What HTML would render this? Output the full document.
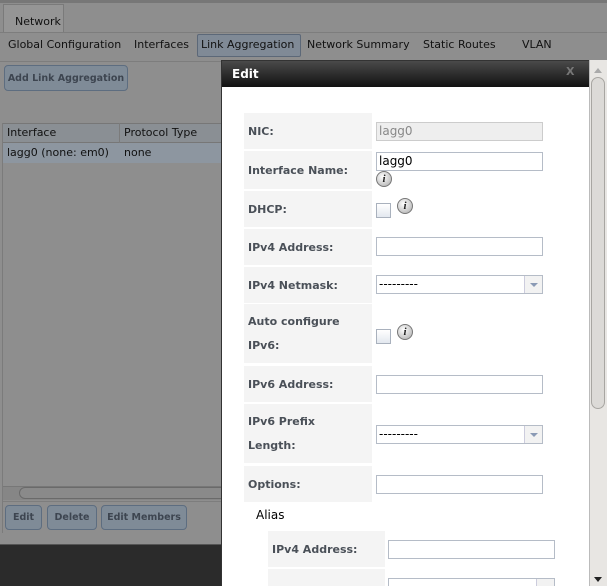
<!DOCTYPE html>
<html><head><style>
*{box-sizing:border-box;margin:0;padding:0}
html,body{width:607px;height:586px;overflow:hidden}
body{font-family:"DejaVu Sans","Liberation Sans",sans-serif;font-size:11px;position:relative;color:#000}
.a{position:absolute;white-space:nowrap}
.lbl{position:absolute;background:#f4f4f4;font-weight:bold;color:#4a5058;font-size:11px;padding-left:4px;display:flex;align-items:center}
.inp{position:absolute;height:19px;border:1px solid #b5bcc7;background:#fff;font-size:12px;padding-left:2px;line-height:17px}
.cb{position:absolute;width:15px;height:15px;border:1px solid #a9b1bd;background:linear-gradient(#fff,#e3e8ef)}
.info{position:absolute;width:16px;height:16px;border-radius:50%;border:1px solid #777;background:radial-gradient(circle at 40% 35%,#fff,#aaa);font:italic bold 11px "Liberation Serif",serif;text-align:center;line-height:14px;color:#222}
.sel .arr{position:absolute;right:0;top:0;width:18px;height:17px;border-left:1px solid #ccd;background:#f2f2f2}
.sel .arr:after{content:"";position:absolute;left:5px;top:7px;border:4px solid transparent;border-top:4px solid #8a9ab5}
.btn{position:absolute;height:25px;border:1px solid #5d6d80;border-radius:4px;background:#7f8b97;color:#3d4550;font-weight:bold;font-size:9.5px;display:flex;align-items:center;justify-content:center;white-space:nowrap}
</style></head><body>
<div class="a" style="left:0;top:0;width:607px;height:586px;background:#8e8e8e"></div>
<div class="a" style="left:0;top:0;width:607px;height:3px;background:#777"></div>
<div class="a" style="left:3px;top:4px;width:61px;height:29px;background:#959595;border:1px solid #7a7a7a;border-bottom:none;padding:10px 0 0 11px;font-size:11px;color:#111">Network</div>
<div class="a" style="left:0;top:32px;width:607px;height:1px;background:#7d7d7d"></div>
<div class="a" style="left:8px;top:38px;color:#111">Global Configuration</div>
<div class="a" style="left:134px;top:38px;color:#111">Interfaces</div>
<div class="a" style="left:197px;top:34px;width:104px;height:23px;border:1px solid #5c6878;border-radius:2px;background:#808a96"></div>
<div class="a" style="left:201px;top:38px;color:#111">Link Aggregation</div>
<div class="a" style="left:307px;top:38px;color:#111">Network Summary</div>
<div class="a" style="left:423px;top:38px;color:#111">Static Routes</div>
<div class="a" style="left:522px;top:38px;color:#111">VLAN</div>
<div class="a" style="left:0;top:61px;width:607px;height:1px;background:#7d7d7d"></div>
<div class="btn" style="left:4px;top:65px;width:124px;height:26px">Add Link Aggregation</div>
<div class="a" style="left:3px;top:123px;width:220px;height:20px;background:#8a8f94;border-top:1px solid #777;border-bottom:1px solid #777"></div>
<div class="a" style="left:7px;top:126px;color:#111">Interface</div>
<div class="a" style="left:119px;top:123px;width:1px;height:40px;background:#7b7b7b"></div>
<div class="a" style="left:124px;top:126px;color:#111">Protocol Type</div>
<div class="a" style="left:3px;top:143px;width:220px;height:20px;background:#8d96a0"></div>
<div class="a" style="left:7px;top:146px;color:#111">lagg0 (none: em0)</div>
<div class="a" style="left:124px;top:146px;color:#111">none</div>
<div class="a" style="left:2px;top:123px;width:1px;height:410px;background:#7b7b7b"></div>
<div class="a" style="left:3px;top:486px;width:220px;height:14px;background:#868686;border-top:1px solid #777"></div>
<div class="a" style="left:19px;top:487px;width:210px;height:12px;border:1px solid #6a6a6a;border-radius:6px;background:#8a8a8a"></div>
<div class="a" style="left:3px;top:501px;width:220px;height:1px;background:#7d7d7d"></div>
<div class="btn" style="left:5px;top:505px;width:37px">Edit</div>
<div class="btn" style="left:47px;top:505px;width:50px">Delete</div>
<div class="btn" style="left:101px;top:505px;width:86px">Edit Members</div>
<div class="a" style="left:0;top:544px;width:607px;height:42px;background:#2b2b2b;border-top:1px solid #555"></div>
<!-- dialog -->
<div class="a" style="left:221px;top:60px;width:369px;height:526px;background:#fff;border:1px solid #333;border-bottom:none"></div>
<div class="a" style="left:222px;top:61px;width:367px;height:26px;background:linear-gradient(#4a4a4a,#111);color:#fff;font-weight:bold;font-size:12px;padding:6px 0 0 10px">Edit</div>
<div class="a" style="left:566px;top:65px;color:#777;font-weight:bold;font-size:11px">X</div>
<div class="a" style="left:589px;top:60px;width:18px;height:526px;background:#e8e6e3;border-left:1px solid #bbb"></div>
<div class="a" style="left:591px;top:77px;width:14px;height:332px;border:1px solid #a8a6a2;border-radius:7px;background:#dcdad7"></div>
<div class="a" style="left:594px;top:64px;border:4px solid transparent;border-bottom:5px solid #aaa"></div>
<div class="a" style="left:594px;top:577px;border:4px solid transparent;border-top:5px solid #222"></div>

<div class="lbl" style="left:244px;top:113px;width:128px;height:36px">NIC:</div>
<div class="inp" style="left:376px;top:122px;width:167px;background:#eee;border-color:#ccc;color:#888">lagg0</div>
<div class="lbl" style="left:244px;top:151px;width:128px;height:38px">Interface Name:</div>
<div class="inp" style="left:376px;top:152px;width:167px">lagg0</div>
<div class="info" style="left:376px;top:171px">i</div>
<div class="lbl" style="left:244px;top:191px;width:128px;height:36px">DHCP:</div>
<div class="cb" style="left:376px;top:203px"></div><div class="info" style="left:397px;top:198px">i</div>
<div class="lbl" style="left:244px;top:229px;width:128px;height:36px">IPv4 Address:</div>
<div class="inp" style="left:376px;top:237px;width:167px"></div>
<div class="lbl" style="left:244px;top:267px;width:128px;height:36px">IPv4 Netmask:</div>
<div class="inp sel" style="left:376px;top:275px;width:167px">---------<div class="arr"></div></div>
<div class="lbl" style="left:244px;top:304px;width:128px;height:59px;line-height:24px">Auto configure<br>IPv6:</div>
<div class="cb" style="left:376px;top:329px"></div><div class="info" style="left:397px;top:324px">i</div>
<div class="lbl" style="left:244px;top:366px;width:128px;height:36px">IPv6 Address:</div>
<div class="inp" style="left:376px;top:375px;width:167px"></div>
<div class="lbl" style="left:244px;top:404px;width:128px;height:59px;line-height:24px">IPv6 Prefix<br>Length:</div>
<div class="inp sel" style="left:376px;top:425px;width:167px">---------<div class="arr"></div></div>
<div class="lbl" style="left:244px;top:466px;width:128px;height:36px">Options:</div>
<div class="inp" style="left:376px;top:475px;width:167px"></div>
<div class="a" style="left:256px;top:508px;font-size:12px">Alias</div>
<div class="lbl" style="left:268px;top:531px;width:117px;height:36px">IPv4 Address:</div>
<div class="inp" style="left:388px;top:540px;width:167px"></div>
<div class="lbl" style="left:268px;top:569px;width:117px;height:20px"></div>
<div class="inp sel" style="left:388px;top:578px;width:167px"><div class="arr"></div></div>
</body></html>
